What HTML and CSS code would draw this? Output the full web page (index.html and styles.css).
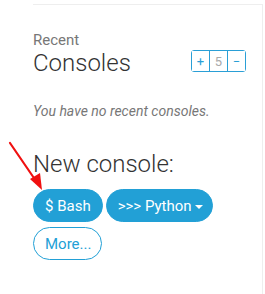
FILE: index.html
```html
<!DOCTYPE html>
<html>
<head>
    <meta name="viewport" content="width=device-width, initial-scale=1.0">
    <link rel="stylesheet" href="styles.css">
</head>
<body>
    <div class="panel">
        <div class="recent-head">
            <div class="titles">
                <div class="subtitle">Recent</div>
                <div class="heading">Consoles</div>
            </div>
            <div class="counter">
                <button class="count-btn">+</button>
                <span class="count-val">5</span>
                <button class="count-btn">&minus;</button>
            </div>
        </div>
        <p class="empty">You have no recent consoles.</p>
        <div class="heading new-title">New console:</div>
        <div class="actions">
            <button class="btn btn-fill">$ Bash</button>
            <button class="btn btn-fill btn-drop">&gt;&gt;&gt; Python <span class="caret"></span></button>
            <button class="btn btn-outline">More...</button>
        </div>
    </div>

    <!-- annotation arrow -->
    <svg class="arrow" width="50" height="60" viewBox="0 0 50 60">
        <line x1="10" y1="8" x2="36" y2="46" stroke="#f01010" stroke-width="2.2" stroke-linecap="round"/>
        <polygon points="42,55 30,44 40,38" fill="#f01010"/>
    </svg>
</body>
</html>
```

FILE: styles.css
```css
body {
    margin: 0;
    background: #fff;
    font-family: Roboto, "Liberation Sans", sans-serif;
    position: relative;
    overflow: hidden;
}

.panel {
    box-sizing: border-box;
    margin: 4px 0 0 33px;
    width: 230px;
    height: 290px;
    padding: 26px 16px 0 0;
    border-top: 1px solid #eeeeee;
    border-right: 1px solid #eeeeee;
}

.recent-head {
    display: flex;
    align-items: flex-end;
    justify-content: space-between;
}

.subtitle {
    font-size: 15px;
    color: #777;
    line-height: 18px;
}

.heading {
    font-size: 24px;
    font-weight: 300;
    color: #333;
    line-height: 28px;
}

.counter {
    display: flex;
    margin-bottom: 5px;
    border: 1px solid #2a9fd6;
    border-radius: 3px;
    height: 20px;
}

.count-btn, .count-val {
    width: 17px;
    display: flex;
    align-items: center;
    justify-content: center;
    font-family: inherit;
    font-size: 13px;
    padding: 0;
}

.count-btn {
    background: #fff;
    border: none;
    color: #2a9fd6;
}

.count-val {
    color: #aaa;
    border-left: 1px solid #2a9fd6;
    border-right: 1px solid #2a9fd6;
}

.empty {
    margin: 26px 0 0;
    font-size: 14px;
    font-style: italic;
    color: #777;
}

.new-title {
    margin-top: 31px;
}

.actions {
    display: flex;
    flex-wrap: wrap;
    gap: 5px 3px;
    margin-top: 11px;
}

.btn {
    height: 33px;
    border-radius: 17px;
    font-family: inherit;
    font-size: 15px;
    padding: 0 11px;
    cursor: pointer;
}

.btn-fill {
    background: #22a0d6;
    border: 1px solid #22a0d6;
    color: #fff;
    min-width: 69px;
}

.btn-drop {
    padding: 0 9px 0 11px;
}

.btn-outline {
    background: #fff;
    border: 1px solid #22a0d6;
    color: #22a0d6;
    width: 69px;
}

.caret {
    display: inline-block;
    width: 0;
    height: 0;
    vertical-align: middle;
    border-top: 4px solid #fff;
    border-left: 4px solid transparent;
    border-right: 4px solid transparent;
}

.arrow {
    position: absolute;
    left: 0;
    top: 135px;
}
```
